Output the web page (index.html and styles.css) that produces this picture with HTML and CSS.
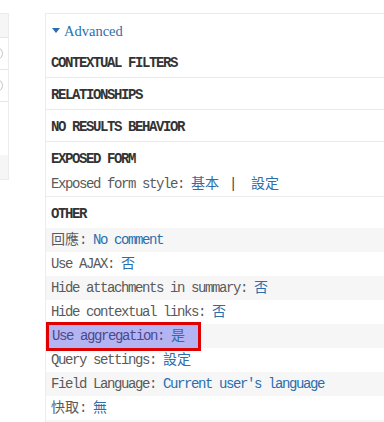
FILE: index.html
```html
<!DOCTYPE html>
<html lang="zh-Hant">
<head>
    <meta charset="UTF-8">
    <meta name="viewport" content="width=device-width, initial-scale=1.0">
    <title>Advanced</title>
    <link rel="stylesheet" href="styles.css">
</head>
<body>
    <div class="page">
        <!-- left column, mostly off screen -->
        <div class="side">
            <div class="side-head"></div>
            <div class="side-row"><span class="dot"></span></div>
            <div class="side-row"><span class="dot"></span></div>
            <div class="side-space"></div>
            <div class="side-foot"></div>
        </div>

        <div class="panel">
            <div class="panel-head">
                <a href="#" class="toggle"><span class="caret"></span>Advanced</a>
            </div>

            <div class="section"><h3>CONTEXTUAL FILTERS</h3></div>
            <div class="section"><h3>RELATIONSHIPS</h3></div>
            <div class="section"><h3>NO RESULTS BEHAVIOR</h3></div>

            <div class="section">
                <h3>EXPOSED FORM</h3>
                <div class="opt plain">Exposed form style: <a href="#" class="zh">基本</a> <span class="sep">|</span> <a href="#" class="zh">設定</a></div>
            </div>

            <div class="section other">
                <h3>OTHER</h3>
                <div class="opt"><span class="zh">回應</span>: <a href="#">No comment</a></div>
                <div class="opt">Use AJAX: <a href="#" class="zh">否</a></div>
                <div class="opt">Hide attachments in summary: <a href="#" class="zh">否</a></div>
                <div class="opt">Hide contextual links: <a href="#" class="zh">否</a></div>
                <div class="opt"><span class="marked">Use aggregation: <a href="#" class="zh">是</a></span></div>
                <div class="opt">Query settings: <a href="#" class="zh">設定</a></div>
                <div class="opt">Field Language: <a href="#">Current user's language</a></div>
                <div class="opt"><span class="zh">快取</span>: <a href="#" class="zh">無</a></div>
                <div class="opt short"></div>
            </div>
        </div>
    </div>
</body>
</html>
```

FILE: styles.css
```css
html, body {
    margin: 0;
    padding: 0;
    height: 422px;
    overflow: hidden;
    background-color: #fff;
}

body {
    font-family: "Liberation Mono", "Noto Sans CJK TC", monospace;
    font-size: 14px;
    letter-spacing: -1.4px;
    color: #5a5a5a;
}

a {
    color: #2b6ead;
    text-decoration: none;
}

.zh {
    letter-spacing: 0;
}

.page {
    display: flex;
    align-items: flex-start;
    padding-top: 13px;
}

/* left column */
.side {
    flex: 0 0 60px;
    margin-left: -52px; /* only the right edge shows */
    margin-right: 36px;
    border-top: 1px solid #ececec;
    border-right: 1px solid #ececec;
    border-bottom: 1px solid #ececec;
}

.side-head {
    height: 23px;
    background-color: #f6f6f6;
    border-bottom: 1px solid #e6e6e6;
}

.side-row {
    height: 31px;
    border-bottom: 1px solid #e6e6e6;
    display: flex;
    align-items: center;
    justify-content: flex-end;
}

.dot {
    flex: 0 0 auto;
    width: 11px;
    height: 11px;
    border: 1px solid #c4c4c4;
    border-radius: 50%;
    margin-right: 5px;
}

.side-space {
    height: 53px;
}

.side-foot {
    height: 24px;
    background-color: #f6f6f6;
}

/* main panel */
.panel {
    flex: 0 0 400px;
    border-top: 1px solid #ececec;
    border-left: 1px solid #ececec;
}

.panel-head {
    height: 30px;
    padding: 2px 0 0 5px;
    display: flex;
    align-items: center;
}

.toggle {
    display: flex;
    align-items: center;
    font-family: "Liberation Serif", serif;
    font-size: 14.5px;
    letter-spacing: 0;
    color: #2b6ead;
}

.caret {
    width: 0;
    height: 0;
    border-left: 4px solid transparent;
    border-right: 4px solid transparent;
    border-top: 5px solid #2b6ead;
    margin: -1px 4px 0 1px;
}

.section {
    border-bottom: 1px solid #ececec;
}

.section.other {
    border-bottom: none;
}

h3 {
    margin: 0;
    height: 28px;
    line-height: 28px;
    padding: 3px 0 0 5px;
    font-size: 14px;
    font-weight: bold;
    color: #333;
    box-sizing: content-box;
}

.opt {
    height: 24px;
    line-height: 24px;
    padding-left: 5px;
    white-space: nowrap;
}

.opt.plain {
    height: 23px;
    line-height: 22px;
}

.opt.short {
    height: 5px;
}

.other .opt:nth-of-type(odd) {
    background-color: #f6f6f6;
}

.sep {
    color: #444;
    margin: 0 8px 0 3px;
}

/* marked row */
.marked {
    display: inline-block;
    vertical-align: top;
    height: 23px;
    line-height: 23px;
    margin: -2px 0 0 -5px;
    padding: 0 13px 0 3px;
    border: 3px solid #e00000;
    background-color: #b4b4f3;
    color: #4a4a8a;
}
```
